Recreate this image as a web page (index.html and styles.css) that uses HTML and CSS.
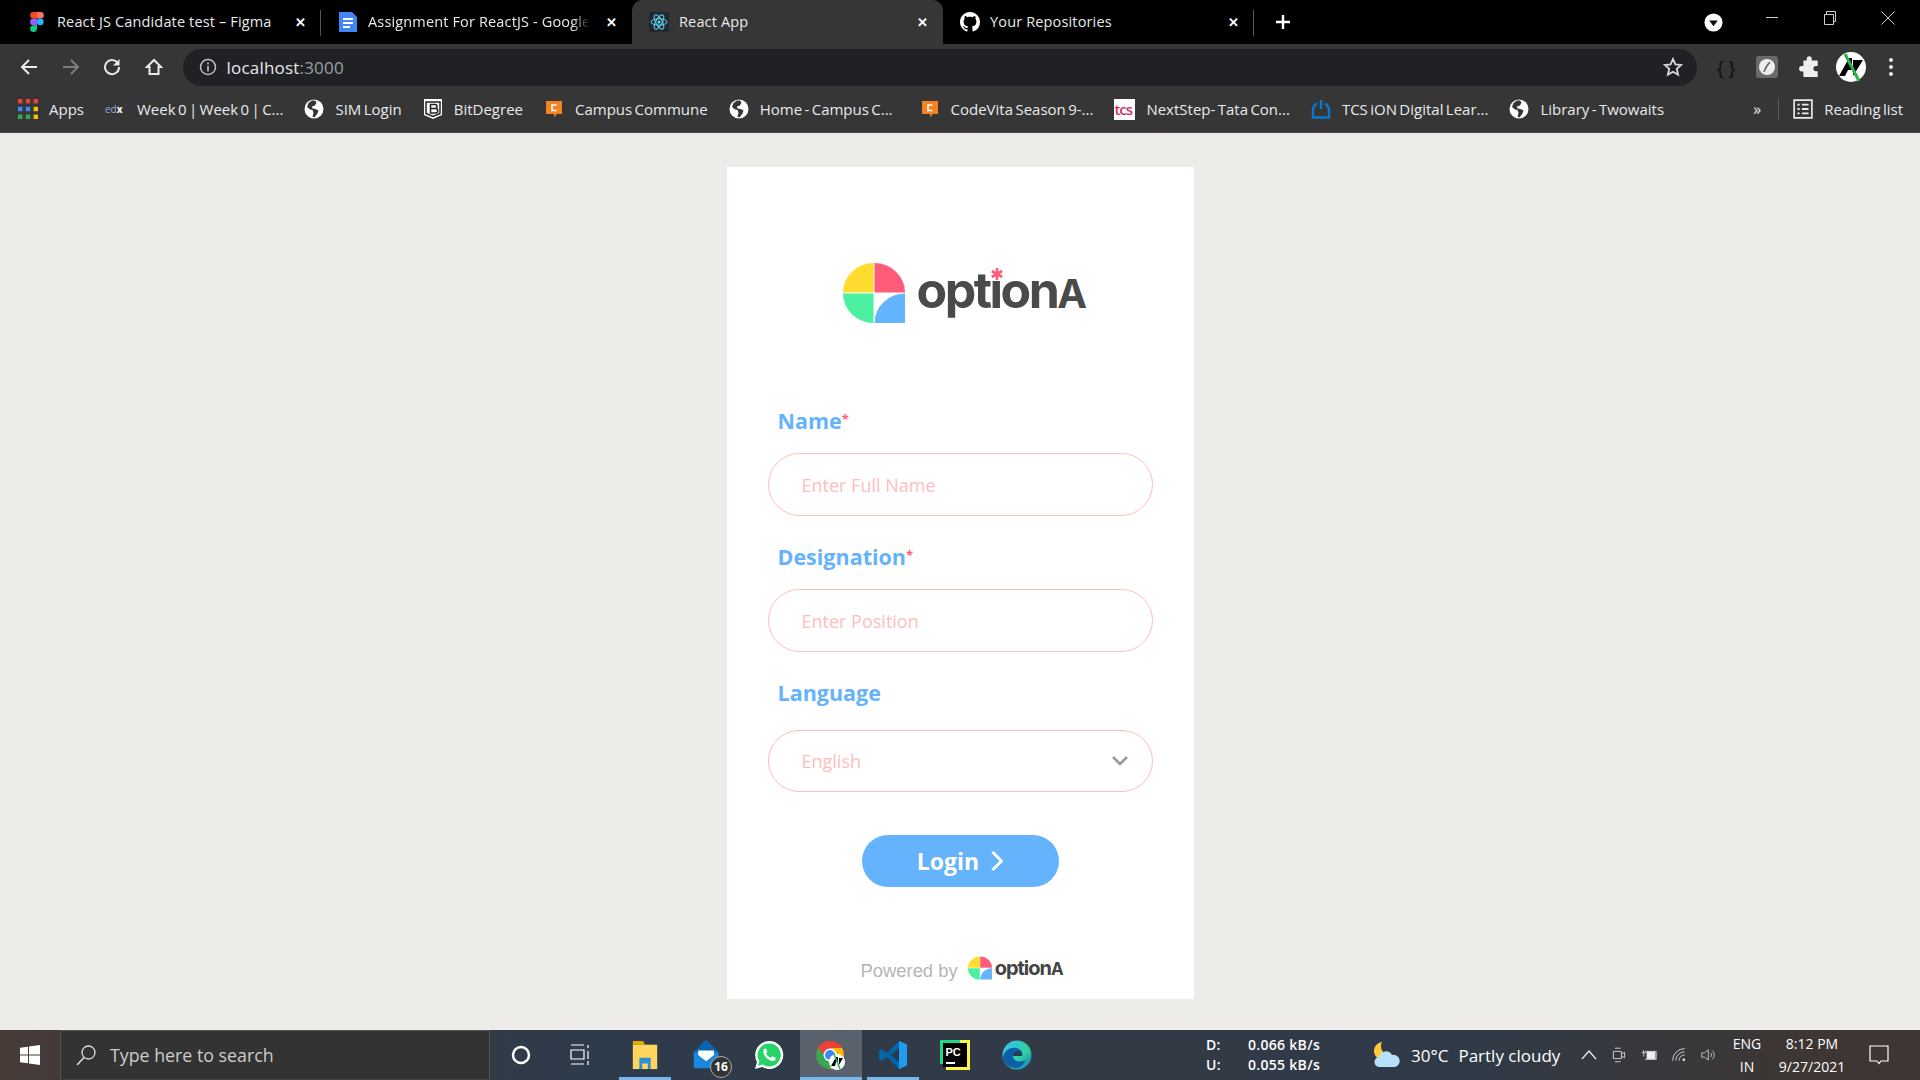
FILE: index.html
```html
<!DOCTYPE html>
<html lang="en">
<head>
  <meta charset="UTF-8" />
  <title>React App</title>
  <link rel="stylesheet" href="styles.css">
</head>
<body>
  <svg class="defs" width="0" height="0">
    <symbol id="markLogo" viewBox="0 0 62 60">
      <path fill="#ffdc2e" d="M30.5 29.5V0A30.5 29.5 0 0 0 0 29.5Z"/>
      <path fill="#ff5c7a" d="M31.5 29.5V0A30.5 29.5 0 0 1 62 29.5Z"/>
      <path fill="#4bf0a0" d="M30.5 30.5V60A30.5 29.5 0 0 1 0 30.5Z"/>
      <path fill="#64b4ff" d="M31.5 60A30.5 29.5 0 0 1 62 30.5V60Z"/>
    </symbol>
    <symbol id="globe" viewBox="0 0 20 20">
      <circle cx="10" cy="10" r="9.5" fill="#fff"/>
      <path fill="#35363a" d="M8 1.5 4.5 4 3 8l3 2.5 2.5.5 1 3-1 3.5 2 1 3-4 1-3-3-1.5-3-.5-.5-2 3-1 1.5-3L11 1.5Z"/>
    </symbol>
    <symbol id="campus" viewBox="0 0 18 20">
      <path fill="#f58220" d="M1 2h16v13h-5l-3 3v-3H1Z"/>
      <path fill="none" stroke="#fff" stroke-width="1.6" d="M11.5 6H7v5.5h4.5"/>
    </symbol>
  </svg>

  <!-- Browser tabs -->
  <div class="tabstrip">
    <div class="tab sep">
      <svg class="tab-icon" viewBox="0 0 20 20">
        <path fill="#f24e1e" d="M6.500 0H10v6.600H6.500a3.300 3.300 0 0 1 0-6.600Z"/>
        <path fill="#ff7262" d="M10 0h3.500a3.300 3.300 0 0 1 0 6.600H10Z"/>
        <path fill="#a259ff" d="M10 6.600H6.500a3.300 3.300 0 0 0 0 6.600H10Z"/>
        <circle cx="13.300" cy="9.900" r="3.300" fill="#1abcfe"/>
        <path fill="#0acf83" d="M10 13.200H6.500a3.400 3.400 0 1 0 3.500 3.400Z"/>
      </svg>
      <span class="tab-title">React JS Candidate test – Figma</span>
      <span class="tab-close">✕</span>
    </div>
    <div class="tab">
      <svg class="tab-icon" viewBox="0 0 20 20">
        <path fill="#4285f4" d="M1 0h13l5 5v15H1Z"/>
        <path fill="#fff" d="M5 6h10v2H5ZM5 10h10v2H5ZM5 14h7v2H5Z"/>
      </svg>
      <span class="tab-title fade">Assignment For ReactJS - Google</span>
      <span class="tab-close">✕</span>
    </div>
    <div class="tab active">
      <svg class="tab-icon" viewBox="0 0 20 20">
        <rect width="20" height="20" rx="2" fill="#23272e"/>
        <g fill="none" stroke="#61dafb" stroke-width="1">
          <ellipse cx="10" cy="10" rx="8" ry="3.200"/>
          <ellipse cx="10" cy="10" rx="8" ry="3.200" transform="rotate(60 10 10)"/>
          <ellipse cx="10" cy="10" rx="8" ry="3.200" transform="rotate(120 10 10)"/>
        </g>
        <circle cx="10" cy="10" r="1.600" fill="#61dafb"/>
      </svg>
      <span class="tab-title">React App</span>
      <span class="tab-close">✕</span>
    </div>
    <div class="tab sep">
      <svg class="tab-icon" viewBox="0 0 16 16">
        <path fill="#fff" d="M8 0C3.580 0 0 3.580 0 8c0 3.540 2.290 6.530 5.470 7.590.4.070.55-.17.55-.38 0-.19-.01-.82-.01-1.490-2.010.37-2.530-.49-2.690-.94-.09-.23-.48-.94-.82-1.130-.28-.15-.68-.52-.01-.53.63-.01 1.080.58 1.230.82.72 1.210 1.870.87 2.330.66.07-.52.28-.87.51-1.070-1.780-.2-3.640-.89-3.640-3.950 0-.87.31-1.590.82-2.150-.08-.2-.36-1.020.08-2.120 0 0 .67-.21 2.200.82.64-.18 1.320-.27 2-.27.68 0 1.360.09 2 .27 1.530-1.040 2.200-.82 2.200-.82.44 1.100.16 1.920.08 2.120.51.56.82 1.270.82 2.150 0 3.070-1.870 3.750-3.650 3.950.29.25.54.73.54 1.480 0 1.070-.01 1.930-.01 2.200 0 .21.15.46.55.38A8.013 8.013 0 0 0 16 8c0-4.420-3.580-8-8-8z"/>
      </svg>
      <span class="tab-title">Your Repositories</span>
      <span class="tab-close">✕</span>
    </div>
    <svg class="new-tab" viewBox="0 0 16 16"><path stroke="#fff" stroke-width="2.400" d="M8 1v14M1 8h14"/></svg>
    <svg class="tab-search" viewBox="0 0 20 20">
      <circle cx="10" cy="10" r="9.500" fill="#fff"/>
      <path fill="#111" d="M5.500 8h9L10 14Z"/>
    </svg>
    <div class="window-controls">
      <svg viewBox="0 0 14 14"><path stroke="#ccc" d="M1 6.500h12"/></svg>
      <svg viewBox="0 0 14 14"><path fill="none" stroke="#ccc" d="M1.500 3.500h9v10h-9ZM3.500 3.500v-3h9v10h-2"/></svg>
      <svg viewBox="0 0 14 14"><path stroke="#ccc" d="m.5.5 13 13M13.500.5l-13 13"/></svg>
    </div>
  </div>

  <!-- Address bar -->
  <div class="toolbar">
    <div class="nav-buttons">
      <svg viewBox="0 0 18 18"><path fill="none" stroke="#e8eaed" stroke-width="2" d="M17 9H2.500M9 2 2 9l7 7"/></svg>
      <svg viewBox="0 0 18 18"><path fill="none" stroke="#7c7d80" stroke-width="2" d="M1 9h14.500M9 2l7 7-7 7"/></svg>
      <svg viewBox="0 0 18 18"><path fill="none" stroke="#e8eaed" stroke-width="2" d="M15 5.500A7 7 0 1 0 16 9"/><path fill="#e8eaed" d="M16.500 1v6.500H10Z"/></svg>
      <svg viewBox="0 0 18 18"><path fill="none" stroke="#e8eaed" stroke-width="2" d="M9 2 2 9h2.500v7h9V9H16Z"/></svg>
    </div>
    <div class="urlbar">
      <svg class="url-info" viewBox="0 0 18 18">
        <circle cx="9" cy="9" r="7.500" fill="none" stroke="#bdc1c6" stroke-width="1.500"/>
        <path stroke="#bdc1c6" stroke-width="1.600" d="M9 8v5.500M9 4.500v2"/>
      </svg>
      <span class="url-text">localhost<span class="url-port">:3000</span></span>
      <svg class="url-star" viewBox="0 0 20 20"><path fill="none" stroke="#d8d9db" stroke-width="1.800" d="m10 2 2.400 5.400 5.800.6-4.400 3.900 1.300 5.800L10 14.700l-5.100 3 1.300-5.800L1.800 8l5.800-.6Z"/></svg>
    </div>
    <div class="toolbar-actions">
      <span class="braces">{ }</span>
      <svg viewBox="0 0 22 22">
        <rect width="22" height="22" rx="3" fill="#6a6a6a"/>
        <circle cx="11" cy="11" r="8" fill="#eee"/>
        <path stroke="#6a6a6a" stroke-width="1.500" d="M8 16c1-4 3-7 6-10"/>
      </svg>
      <svg viewBox="0 0 20 20"><path fill="#eee" d="M7 2.500a2.300 2.300 0 0 1 4.600 0V4H17v5h-1.500a2.400 2.400 0 0 0 0 4.800H17V19H4v-5H2.500a2.400 2.400 0 0 1 0-4.800H4V4h3Z"/></svg>
      <svg class="avatar" viewBox="0 0 30 30">
        <circle cx="15" cy="15" r="15" fill="#fff"/>
        <path fill="#000" d="M3 24 13 6h3v12h-4l-3 6ZM17 8h10L17 24Z"/>
        <path stroke="#2bb24c" stroke-width="3" d="m9 2 14 27"/>
      </svg>
      <svg class="dots" viewBox="0 0 6 20"><g fill="#e8eaed"><circle cx="3" cy="3" r="2"/><circle cx="3" cy="10" r="2"/><circle cx="3" cy="17" r="2"/></g></svg>
    </div>
  </div>

  <!-- Bookmarks -->
  <div class="bookmarks">
    <a class="bm">
      <svg class="bm-icon" viewBox="0 0 18 18">
        <g fill="#ea4335"><rect width="4" height="4"/><rect x="7" width="4" height="4"/><rect x="14" width="4" height="4"/></g>
        <g fill="#4285f4"><rect y="7" width="4" height="4"/><rect x="7" y="7" width="4" height="4"/></g>
        <rect x="14" y="7" width="4" height="4" fill="#fbbc05"/>
        <g fill="#34a853"><rect y="14" width="4" height="4"/><rect x="7" y="14" width="4" height="4"/></g>
        <rect x="14" y="14" width="4" height="4" fill="#fbbc05"/>
      </svg>Apps</a>
    <a class="bm">
      <span class="edx">ed<b>x</b></span>Week 0 | Week 0 | C...</a>
    <a class="bm"><svg class="bm-icon"><use href="#globe"/></svg>SIM Login</a>
    <a class="bm">
      <svg class="bm-icon" viewBox="0 0 20 20">
        <path fill="#fff" d="M1 0h18v16l-9 4-9-4Z"/>
        <path fill="none" stroke="#222" stroke-width="1.500" d="M3 3h14v11.500L10 17.500l-7-3ZM7.500 5.500h4.500a2 2 0 0 1 0 4H7.500h5a2 2 0 0 1 0 4.500h-5Z"/>
      </svg>BitDegree</a>
    <a class="bm"><svg class="bm-icon"><use href="#campus"/></svg>Campus Commune</a>
    <a class="bm bm-home"><svg class="bm-icon"><use href="#globe"/></svg>Home - Campus C...</a>
    <a class="bm"><svg class="bm-icon"><use href="#campus"/></svg>CodeVita Season 9-...</a>
    <a class="bm"><span class="tcs">tcs</span>NextStep- Tata Con...</a>
    <a class="bm">
      <svg class="bm-icon" viewBox="0 0 20 20"><path fill="none" stroke="#0b78d0" stroke-width="2.400" d="M6 4.500a8 8 0 0 0-4 6.900V18.500h16v-7a8 8 0 0 0-4-6.900M10 1v9"/></svg>TCS iON Digital Lear...</a>
    <a class="bm"><svg class="bm-icon"><use href="#globe"/></svg>Library - Twowaits</a>
    <span class="bm-more">»</span>
    <a class="bm reading">
      <svg class="bm-icon" viewBox="0 0 18 18">
        <path fill="none" stroke="#e8eaed" stroke-width="1.500" d="M1 1h16v16H1Z"/>
        <path stroke="#e8eaed" stroke-width="1.600" d="M4 5h2M8 5h6M4 9h2M8 9h6M4 13h2M8 13h6"/>
      </svg>Reading list</a>
  </div>

  <!-- Login page -->
  <main class="page">
    <form class="card">
      <div class="logo">
        <svg class="logo-mark"><use href="#markLogo"/></svg>
        <span class="logo-text">opt<span class="logo-i">i<svg class="logo-star" viewBox="0 0 14 14"><rect width="14" height="14" fill="#fff"/><path stroke="#ff5c7a" stroke-width="2.600" d="M7 1v12M1.800 4 12.200 10M12.200 4 1.800 10"/></svg></span>on<span class="logo-a">A</span></span>
      </div>

      <div class="field">
        <label class="field-label" for="fullName">Name<span class="req">*</span></label>
        <input class="field-input" id="fullName" type="text" placeholder="Enter Full Name" />
      </div>
      <div class="field">
        <label class="field-label" for="position">Designation<span class="req">*</span></label>
        <input class="field-input" id="position" type="text" placeholder="Enter Position" />
      </div>
      <div class="field field-select">
        <label class="field-label" for="language">Language</label>
        <div class="select-wrap">
          <select class="field-input" id="language"><option>English</option></select>
          <svg class="select-arrow" viewBox="0 0 16 10"><path fill="none" stroke="#999" stroke-width="2.600" d="m1 1 7 7 7-7"/></svg>
        </div>
      </div>

      <button class="login-btn" type="button">Login
        <svg viewBox="0 0 12 20"><path fill="none" stroke="#fff" stroke-width="2.800" d="m1.500 1 9 9-9 9"/></svg>
      </button>

      <div class="powered">
        <span class="powered-text">Powered by</span>
        <svg class="powered-mark"><use href="#markLogo"/></svg>
        <span class="powered-name">option<span class="powered-a">A</span></span>
      </div>
    </form>
  </main>

  <!-- Windows taskbar -->
  <footer class="taskbar">
    <div class="start">
      <svg viewBox="0 0 20 20"><path fill="#fff" d="M0 2.800 8 1.700v7.700H0ZM9 1.500 20 0v9.400H9ZM0 10.500h8v7.800l-8-1.100ZM9 10.500h11V20L9 18.500Z"/></svg>
    </div>
    <div class="search">
      <svg viewBox="0 0 20 20"><circle cx="12.500" cy="7.500" r="6.500" fill="none" stroke="#ddd" stroke-width="1.300"/><path stroke="#ddd" stroke-width="1.500" d="M8 12.500 1 20"/></svg>
      <span>Type here to search</span>
    </div>
    <div class="task-icons">
      <div class="task">
        <svg class="task-ring" viewBox="0 0 20 20"><circle cx="10" cy="10" r="8" fill="none" stroke="#fff" stroke-width="2.500"/></svg>
      </div>
      <div class="task">
        <svg class="task-view" viewBox="0 0 20 22"><path fill="none" stroke="#fff" stroke-width="1.200" d="M1 1h13M1 6h13v9H1ZM1 20h13M18 1v3M18 7v8M18 17v4"/></svg>
      </div>
      <div class="task open">
        <svg viewBox="0 0 28 32">
          <path fill="#e8a800" d="M1 1h11l2 4H1Z"/>
          <path fill="#ffd75e" d="M1 5h26v26H1Z"/>
          <path fill="#2d8fd5" d="M8 19h12v12h-3v-6h-6v6H8Z"/>
        </svg>
      </div>
      <div class="task">
        <svg viewBox="0 0 30 34">
          <path fill="#1b88dd" d="M0 14 14 0l14 14v18H0Z"/>
          <path fill="#0a64ad" d="M0 14 14 0l14 14Z"/>
          <path fill="#fff" d="M5 12h18v5l-9 7-9-7Z"/>
        </svg>
        <span class="task-badge">16</span>
      </div>
      <div class="task">
        <svg viewBox="0 0 30 30">
          <path fill="#fff" d="M15 1a14 14 0 0 0-12 21L1 29l7.200-1.900A14 14 0 1 0 15 1Z"/>
          <path fill="#25d366" d="M15 3.500a11.500 11.500 0 0 0-9.700 17.600L4 25.800l4.800-1.300A11.500 11.500 0 1 0 15 3.500Z"/>
          <path fill="#fff" d="M11 8.500c-1.200.6-2 2-1.700 3.800.7 3.900 4.600 8 8.800 8.600 1.700.2 3-.7 3.500-2 .2-.6 0-1-.5-1.300l-2.300-1.200c-.5-.2-.8 0-1.100.4l-.9 1c-2.200-.8-3.800-2.400-4.700-4.500l.9-1c.3-.3.3-.7.200-1.100l-1-2.300c-.2-.5-.6-.6-1.200-.4Z"/>
        </svg>
      </div>
      <div class="task open active">
        <svg viewBox="0 0 30 30">
          <circle cx="14" cy="15" r="14" fill="#ea4335"/>
          <path fill="#34a853" d="M2 8a14 14 0 0 0 12 21l7-12H10Z"/>
          <path fill="#fbbc05" d="M14 29a14 14 0 0 0 12-21H14l7 9Z"/>
          <path fill="#ea4335" d="M2 8a14 14 0 0 1 24 0H14a7 7 0 0 0-7 5Z"/>
          <circle cx="14" cy="15" r="6.500" fill="#fff"/>
          <circle cx="14" cy="15" r="5" fill="#4285f4"/>
          <circle cx="21" cy="22" r="8" fill="#fff"/>
          <path fill="#000" d="m15 26 5-9h2v5h-2l-1 4ZM23 18h4l-4 7Z"/>
          <path stroke="#2bb24c" stroke-width="1.500" d="m18 14 6 15"/>
        </svg>
      </div>
      <div class="task open">
        <svg viewBox="0 0 30 30">
          <path fill="#0065a9" d="M21 1 9 13 3.500 9 1 10.500v9L3.500 21 9 17l12 12 8-3.500v-21Z"/>
          <path fill="#1f9cf0" d="M21 1l8 3.500v21L21 29Z"/>
          <path fill="#2d3a49" d="M21 8v14l-8-7Z"/>
        </svg>
      </div>
      <div class="task">
        <svg viewBox="0 0 30 30">
          <path fill="#21d789" d="M0 0h20v6H6v18H0Z"/>
          <path fill="#fcf84a" d="M20 0h10v30H6v-6h18V6h-4Z"/>
          <rect x="3" y="3" width="24" height="24" fill="#000"/>
          <path fill="#fff" d="M6 22h9v2H6Z"/>
          <text class="pc-label" x="5.500" y="16">PC</text>
        </svg>
      </div>
      <div class="task">
        <svg viewBox="0 0 30 30">
          <defs>
            <linearGradient id="edgeFill" x1="0" y1="0" x2="1" y2="1">
              <stop offset="0" stop-color="#35c1f1"/>
              <stop offset=".6" stop-color="#2fd0a0"/>
              <stop offset="1" stop-color="#0a72c4"/>
            </linearGradient>
          </defs>
          <circle cx="15" cy="15" r="14.500" fill="url(#edgeFill)"/>
          <path fill="#0d5fa8" d="M1 17c2-8 10-11 16-8 3 2 4 4 3 7H11c0 5 6 7 13 4-2 5-7 9-12 8-6-1-11-5-11-11Z"/>
          <path fill="#2d3a49" d="M11 16c0-3 3-5 5-5s3 2 4 5Z"/>
        </svg>
      </div>
    </div>

    <div class="tray">
      <div class="netspeed">
        <div><span>D:</span><span>0.066 kB/s</span></div>
        <div><span>U:</span><span>0.055 kB/s</span></div>
      </div>
      <div class="weather">
        <svg viewBox="0 0 28 26">
          <path fill="#ffc83d" d="M9 0a9 9 0 1 0 9 13A9 9 0 0 1 9 0Z"/>
          <path fill="#b7e0fa" d="M7 25a5 5 0 0 1-1-10 7 7 0 0 1 13-2 6 6 0 0 1 3 12Z"/>
        </svg>
        <span>30°C</span>
        <span>Partly cloudy</span>
      </div>
      <div class="tray-icons">
        <svg viewBox="0 0 16 10"><path fill="none" stroke="#eee" stroke-width="1.200" d="m1 9 7-8 7 8"/></svg>
        <svg viewBox="0 0 18 20"><path fill="none" stroke="#eee" d="M4 1.500h7M4 18.500h7M2 5.500h10v9H2ZM12 8.500l4-2v7l-4-2"/></svg>
        <svg viewBox="0 0 20 14"><path fill="#eee" d="M7 3h11v9H7Z"/><path fill="none" stroke="#eee" d="M5 2.500h14v10H5M3 1v3M1 4h5M3.500 4v5"/></svg>
        <svg viewBox="0 0 20 20"><path fill="none" stroke="#eee" d="M2 17A15 15 0 0 1 17 2M6 17A11 11 0 0 1 17 6M10 17a7 7 0 0 1 7-7"/><circle cx="16" cy="16" r="1.600" fill="#eee"/></svg>
        <svg viewBox="0 0 22 20"><path fill="none" stroke="#eee" d="M1 7h4l5-4v14l-5-4H1ZM13 7a4 4 0 0 1 0 6M15.500 4a8 8 0 0 1 0 12"/></svg>
      </div>
      <div class="lang"><span>ENG</span><span>IN</span></div>
      <div class="clock"><span>8:12 PM</span><span>9/27/2021</span></div>
      <svg class="notify" viewBox="0 0 20 20"><path fill="none" stroke="#fff" stroke-width="1.200" d="M1 1h18v15h-7l-2 2.500L8 16H1Z"/></svg>
    </div>
  </footer>
</body>
</html>
```

FILE: styles.css
```css
* {
  box-sizing: border-box;
}
html, body {
  margin: 0;
  height: 100%;
}
body {
  display: flex;
  flex-direction: column;
  height: 100vh;
  overflow: hidden;
  font-family: "Open Sans", "Noto Sans", sans-serif;
  background-color: #edece8;
  color: #e8eaed;
}
svg {
  display: block;
  flex: none;
}
.defs {
  position: absolute;
}

/* tabs */
.tabstrip {
  display: flex;
  align-items: flex-end;
  height: 44px;
  padding-left: 10px;
  background-color: #000;
}
.tab {
  display: flex;
  align-items: center;
  width: 311px;
  height: 44px;
  padding: 0 12px 0 17px;
  position: relative;
  font-size: 14.5px;
  letter-spacing: 0.15px;
}
.tab.sep::after {
  content: "";
  position: absolute;
  right: 0;
  top: 10px;
  bottom: 8px;
  width: 1px;
  background-color: #555;
}
.tab.active {
  background-color: #363636;
  border-radius: 10px 10px 0 0;
}
.tab-icon {
  width: 20px;
  height: 20px;
  margin-right: 10px;
}
.tab-title {
  flex: 1;
  margin-bottom: 2px;
  overflow: hidden;
  white-space: nowrap;
}
.tab-title.fade {
  -webkit-mask-image: linear-gradient(90deg, #000 92%, transparent);
  mask-image: linear-gradient(90deg, #000 92%, transparent);
}
.tab-close {
  width: 16px;
  margin-left: 14px;
  font-size: 13px;
  font-weight: 700;
  text-align: center;
  color: #fff;
}
.new-tab {
  width: 16px;
  height: 16px;
  margin: 0 0 14px 21px;
}
.tab-search {
  width: 19px;
  height: 19px;
  margin: 0 0 12px 413px;
}
.window-controls {
  display: flex;
  gap: 44px;
  margin: 0 0 19px 42px;
}
.window-controls svg {
  width: 14px;
  height: 14px;
}

/* address bar */
.toolbar {
  display: flex;
  align-items: center;
  height: 46px;
  background-color: #363636;
}
.nav-buttons {
  display: flex;
  gap: 23.5px;
  padding: 0 20px;
}
.nav-buttons svg {
  width: 18px;
  height: 18px;
}
.urlbar {
  display: flex;
  align-items: center;
  width: 1514px;
  height: 37px;
  padding: 0 14px 0 16px;
  border-radius: 19px;
  background-color: #202124;
}
.url-info {
  width: 18px;
  height: 18px;
  margin-right: 10px;
}
.url-text {
  flex: 1;
  font-size: 17px;
  letter-spacing: 0.2px;
  color: #e8eaed;
}
.url-port {
  color: #9aa0a6;
}
.url-star {
  width: 20px;
  height: 20px;
}
.toolbar-actions {
  display: flex;
  align-items: center;
  padding-left: 20px;
}
.toolbar-actions svg {
  width: 22px;
  height: 22px;
  margin-left: 21px;
}
.braces {
  width: 18px;
  font-size: 20px;
  white-space: nowrap;
  word-spacing: -1px;
  color: #111;
}
.toolbar-actions .avatar {
  width: 30px;
  height: 30px;
  margin-left: 15px;
}
.toolbar-actions .dots {
  width: 6px;
  height: 20px;
  margin-left: 22px;
}

/* bookmarks */
.bookmarks {
  display: flex;
  align-items: center;
  height: 43px;
  padding: 0 0 4px 18px;
  background-color: #363636;
  border-bottom: 1px solid #4a4a4a;
  font-size: 15px;
  word-spacing: -1.5px;
}
.bm {
  display: flex;
  align-items: center;
  margin-right: 21px;
  white-space: nowrap;
}
.bm.bm-home {
  margin-right: 27px;
}
.bm-icon {
  width: 20px;
  height: 20px;
  margin-right: 11px;
}
.edx {
  width: 20px;
  margin-right: 12px;
  font-size: 10px;
  color: #9ad;
}
.edx b {
  color: #fff;
}
.tcs {
  width: 21px;
  height: 21px;
  margin-right: 11px;
  background-color: #fff;
  font-size: 15px;
  font-weight: 600;
  line-height: 20px;
  letter-spacing: -1px;
  color: #d3305f;
}
.bm-more {
  margin-left: auto;
  padding-right: 17px;
  border-right: 1px solid #5a5a5a;
  font-size: 16px;
}
.bm.reading {
  margin: 0 17px 0 14px;
}

/* login card */
.page {
  flex: 1;
  display: flex;
  justify-content: center;
  padding-top: 34px;
}
.card {
  display: flex;
  flex-direction: column;
  width: 467px;
  height: 832px;
  padding: 96px 41px 0;
  background-color: #fff;
}
.logo {
  display: flex;
  align-items: flex-start;
  height: 60px;
  margin-bottom: 83px;
  padding-left: 75px;
}
.logo-mark {
  width: 62px;
  height: 60px;
  margin-right: 12px;
}
.logo-text {
  font-family: "Inter", sans-serif;
  font-size: 50px;
  font-weight: 700;
  line-height: 55px;
  letter-spacing: -2.5px;
  white-space: nowrap;
  color: #4a4a4a;
}
.logo-a {
  font-size: 40px;
}
.logo-i {
  position: relative;
}
.logo-star {
  position: absolute;
  left: 0;
  top: 7px;
  width: 14px;
  height: 14px;
}
.field {
  margin-bottom: 26px;
}
.field-label {
  display: block;
  height: 30px;
  margin: 0 0 17px 10px;
  font-size: 21.5px;
  font-weight: 700;
  line-height: 30px;
  color: #64b3fc;
}
.field-select .field-label {
  margin-bottom: 22px;
}
.req {
  position: relative;
  top: -5px;
  font-size: 13px;
  color: #ff5c7a;
}
.field-input {
  display: block;
  width: 100%;
  height: 63px;
  padding: 0 33px;
  appearance: none;
  border: 1px solid #ffbdbd;
  border-radius: 32px;
  outline: none;
  background-color: #fff;
  font-family: inherit;
  font-size: 18px;
  color: #ffbdbd;
}
.field-select .field-input {
  height: 62px;
}
.field-input::placeholder {
  color: #ffbdbd;
  opacity: 1;
}
.select-wrap {
  position: relative;
}
.select-arrow {
  position: absolute;
  right: 25px;
  top: 26px;
  width: 16px;
  height: 10px;
}
.login-btn {
  display: flex;
  align-items: center;
  justify-content: center;
  gap: 12px;
  align-self: center;
  width: 197px;
  height: 52px;
  margin-top: 17px;
  border: none;
  border-radius: 26px;
  background-color: #64b3fc;
  font-family: inherit;
  font-size: 23px;
  font-weight: 700;
  color: #fff;
  cursor: pointer;
}
.login-btn svg {
  width: 12px;
  height: 20px;
}
.powered {
  display: flex;
  align-items: center;
  margin-top: 67px;
  padding-left: 93px;
}
.powered-text {
  margin: 6px 10px 0 0;
  font-family: "Liberation Sans", sans-serif;
  font-size: 18.4px;
  color: #b5b5b5;
}
.powered-mark {
  width: 24px;
  height: 24px;
  margin-right: 3px;
}
.powered-name {
  font-family: "Inter", sans-serif;
  font-size: 20px;
  font-weight: 700;
  letter-spacing: -1px;
  color: #444;
}
.powered-a {
  font-size: 17px;
}

/* taskbar */
.taskbar {
  display: flex;
  align-items: center;
  height: 50px;
  background: linear-gradient(90deg, #463b37 0, #2e3b4b 30%, #333a45 60%, #2f3a49 75%, #3e3632 95%);
  color: #fff;
}
.start {
  display: flex;
  align-items: center;
  justify-content: center;
  width: 60px;
  height: 50px;
}
.start svg {
  width: 20px;
  height: 20px;
}
.search {
  display: flex;
  align-items: center;
  gap: 14px;
  width: 430px;
  height: 50px;
  padding-left: 15px;
  background-color: #333;
  border: 1px solid #555;
  border-bottom-color: #444;
  font-size: 17.8px;
  color: #ccc;
}
.search svg {
  width: 20px;
  height: 20px;
}
.task-icons {
  display: flex;
}
.task {
  display: flex;
  align-items: center;
  justify-content: center;
  position: relative;
  width: 62px;
  height: 50px;
}
.task svg {
  width: 30px;
  height: 30px;
}
.task .task-ring {
  width: 20px;
  height: 20px;
}
.task .task-view {
  width: 20px;
  height: 22px;
  margin-right: 6px;
}
.task.open::after {
  content: "";
  position: absolute;
  left: 5px;
  right: 5px;
  bottom: 0;
  height: 3px;
  background-color: #76b9ed;
}
.task.active {
  background-color: rgba(255, 255, 255, 0.2);
}
.task.active::after {
  left: 0;
  right: 0;
}
.task-badge {
  position: absolute;
  right: 6px;
  bottom: 2px;
  width: 22px;
  height: 22px;
  border: 1px solid #aaa;
  border-radius: 50%;
  background-color: #333;
  font-size: 12px;
  font-weight: 700;
  line-height: 20px;
  text-align: center;
}
.pc-label {
  font-family: "Liberation Sans", sans-serif;
  font-size: 11px;
  font-weight: 700;
  fill: #fff;
}
.tray {
  flex: 1;
  display: flex;
  align-items: center;
  padding-left: 158px;
  font-size: 14px;
}
.netspeed {
  width: 167px;
  font-size: 14px;
  font-weight: 600;
  letter-spacing: 0.3px;
  line-height: 20px;
}
.netspeed div {
  display: flex;
}
.netspeed span:first-child {
  width: 42px;
}
.weather {
  display: flex;
  align-items: center;
  gap: 10px;
  width: 208px;
  font-size: 17px;
}
.weather svg {
  width: 28px;
  height: 26px;
}
.tray-icons {
  display: flex;
  align-items: center;
  gap: 14px;
  width: 149px;
}
.tray-icons svg {
  width: 16px;
  height: 16px;
}
.lang, .clock {
  display: flex;
  flex-direction: column;
  align-items: center;
  line-height: 23px;
}
.lang {
  width: 34px;
}
.clock {
  width: 70px;
  margin-left: 13px;
}
.notify {
  width: 20px;
  height: 20px;
  margin-left: 22px;
}
```
